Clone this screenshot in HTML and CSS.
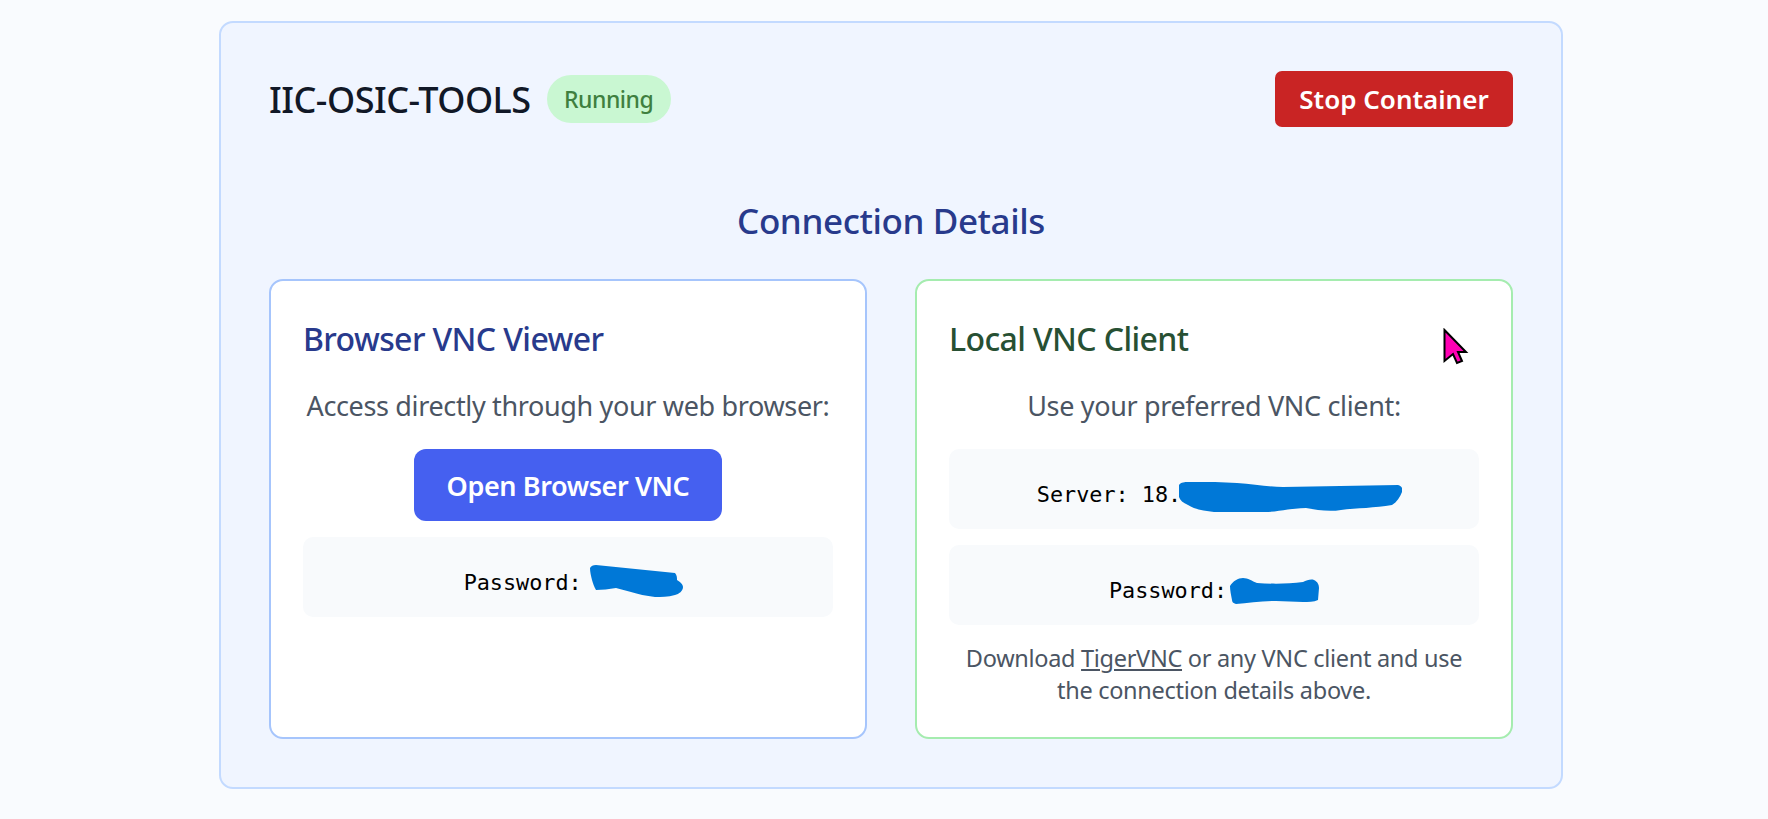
FILE: index.html
```html
<!DOCTYPE html>
<html lang="en">
<head>
  <meta charset="UTF-8">
  <title>IIC-OSIC-TOOLS</title>
  <link rel="stylesheet" href="styles.css">
</head>
<body>

<main class="panel">
  <header class="panel-head">
    <div class="head-left">
      <h1>IIC-OSIC-TOOLS</h1>
      <span class="badge">Running</span>
    </div>
    <button class="btn-stop">Stop Container</button>
  </header>

  <h2>Connection Details</h2>

  <div class="cards">
    <section class="card card-browser">
      <h3>Browser VNC Viewer</h3>
      <p class="lead">Access directly through your web browser:</p>
      <div class="btn-row"><button class="btn-open">Open Browser VNC</button></div>
      <div class="code-box">Password: <svg class="scribble scribble-a" viewBox="0 0 93 32"><path d="M0 3 C1 1 3 0 6 0 L85 8 C87 10 87 13 87 15 C90 17 93 19 93 22 C93 26 89 29 85 30 C78 32 71 32 65 32 C56 31 48 29 41 27 L26 23 C19 24 12 25 6 25 C4 22 3 18 2 15 C1 11 0 7 0 3 Z"/></svg></div>
    </section>

    <section class="card card-local">
      <h3>Local VNC Client</h3>
      <p class="lead">Use your preferred VNC client:</p>
      <div class="code-box">Server: 18.<svg class="scribble scribble-b" viewBox="0 0 223 30"><path d="M0 3 C2 0 6 0 9 0 C25 -0.5 42 0 58 1 C75 2 90 5 104 5 L219 3 C223 4 224 7 223 10 C221 15 218 20 213 23 C196 26 178 26 162 28 C150 30 138 28 127 26 C112 26 100 30 85 30 L35 30 C25 29 15 27 9 23 C4 21 1 18 0 15 Z"/></svg></div>
      <div class="code-box">Password:<svg class="scribble scribble-c" viewBox="0 0 89 26"><path d="M0 8 C3 3 8 0 13 0 C18 0 22 3 27 5 C42 6 58 6 73 4 C77 2 81 1 84 2 C88 4 89 7 89 10 L88 22 C84 24 78 24 73 24 L46 23 C32 23 18 25 6 26 C3 25 2 24 2 22 C1 17 0 12 0 8 Z"/></svg></div>
      <p class="note">Download <a href="#">TigerVNC</a> or any VNC client and use the connection details above.</p>
    </section>
  </div>
</main>

<svg class="cursor" viewBox="0 0 26 37"><path d="M1.5 2 L23 24 L15 24 L19 33 L14 35 L10 26 L1.5 33 Z"/></svg>

</body>
</html>
```

FILE: styles.css
```css
body {
  font-family: "Noto Sans", Arial, sans-serif;
  background: #f9fbfe;
  margin: 0;
  padding: 21px 205px 0 219px;
}

.panel {
  background: #f0f5ff;
  border: 2px solid #c3daff;
  border-radius: 14px;
  padding: 48px 48px 48px;
}

.panel-head {
  display: flex;
  justify-content: space-between;
  align-items: center;
  height: 56px;
}

.head-left {
  display: flex;
  align-items: center;
  gap: 16px;
}

h1 {
  margin: 0;
  font-size: 36px;
  font-weight: 500;
  letter-spacing: -0.5px;
  color: #111827;
}

.badge {
  background: #c9f7d2;
  color: #3f7f3f;
  border-radius: 24px;
  height: 48px;
  width: 124px;
  display: flex;
  align-items: center;
  justify-content: center;
  font-size: 23px;
  font-weight: 500;
  letter-spacing: -0.5px;
}

button {
  font-family: inherit;
  border: none;
  color: white;
  font-weight: 600;
}

.btn-stop {
  background: #c92424;
  width: 238px;
  height: 56px;
  border-radius: 7px;
  font-size: 26px;
}

h2 {
  margin: 74px 0 38px;
  text-align: center;
  font-size: 35px;
  line-height: 40px;
  font-weight: 500;
  letter-spacing: -0.4px;
  color: #283a8c;
}

.cards {
  display: grid;
  grid-template-columns: 1fr 1fr;
  gap: 48px;
}

.card {
  background: white;
  border: 2px solid;
  border-radius: 14px;
  padding: 40px 32px 31px;
  text-align: center;
}

.card-browser { border-color: #a6c5fc; }
.card-local { border-color: #a5ecaf; }

h3 {
  margin: 0 0 33px;
  text-align: left;
  font-size: 32px;
  line-height: 36px;
  font-weight: 500;
  letter-spacing: -0.6px;
}

.card-browser h3 { color: #283a8c; }
.card-local h3 { color: #275033; }

.lead {
  margin: 0 0 27px;
  font-size: 27px;
  line-height: 32px;
  letter-spacing: -0.35px;
  color: #4b5563;
}

.btn-row {
  margin-bottom: 16px;
}

.btn-open {
  background: #4560f0;
  width: 308px;
  height: 72px;
  border-radius: 12px;
  font-size: 27px;
  letter-spacing: -0.4px;
}

.code-box {
  background: #f8fafc;
  border-radius: 10px;
  height: 70px;
  padding-top: 10px;
  margin-bottom: 16px;
  display: flex;
  align-items: center;
  justify-content: center;
  font-family: "DejaVu Sans Mono", monospace;
  font-size: 21.8px;
  white-space: pre;
  color: #000;
}

.scribble {
  fill: #0078d7;
  flex: none;
}

.scribble-a {
  width: 93px;
  height: 32px;
  margin: -2px -11px 0 -4.5px;
}

.scribble-b {
  width: 223px;
  height: 30px;
  margin: 6px -11px 0 -2px;
}

.scribble-c {
  width: 89px;
  height: 26px;
  margin: 2px 0 0 3px;
}

.note {
  margin: 17px 0 0;
  font-size: 23.5px;
  line-height: 32px;
  letter-spacing: -0.3px;
  color: #4b5563;
}

.note a {
  color: inherit;
}

.cursor {
  position: absolute;
  left: 1443px;
  top: 328px;
  width: 26px;
  height: 37px;
  fill: #ff00b4;
  stroke: #000;
  stroke-width: 2;
}
```
